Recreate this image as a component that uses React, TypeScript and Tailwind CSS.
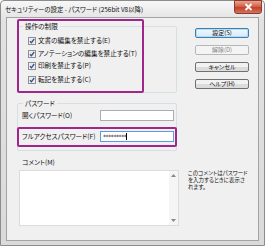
import React from "react";

const jp = "[font-family:'Noto_Sans_CJK_JP','Noto_Sans',sans-serif] [font-feature-settings:'palt']";

function Check() {
  return (
    <svg width="8" height="8" viewBox="0 0 8 8" className="shrink-0">
      <rect x="0.5" y="0.5" width="7" height="7" fill="#f4f4f4" stroke="#8e8f8f" />
      <rect x="1.5" y="1.5" width="5" height="5" fill="#e4e8ee" />
      <path d="M2 4.2 L3.4 5.8 L6.2 2" fill="none" stroke="#3b4f8a" strokeWidth="1.3" />
    </svg>
  );
}

function Btn({ label, kind }: { label: string; kind?: "default" | "disabled" }) {
  const base = "w-[54px] h-[10px] rounded-[2px] border flex items-center justify-center text-[6px] leading-none";
  if (kind === "default")
    return (
      <div className={`${base} border-[#3c7fb1] bg-[linear-gradient(#f0f8fd,#d5e9f7)] text-[#111] shadow-[inset_0_0_0_1px_#b6dcf3]`}>{label}</div>
    );
  if (kind === "disabled")
    return <div className={`${base} border-[#b5b8bb] bg-[#f4f4f4] text-[#8a8a8a]`}>{label}</div>;
  return <div className={`${base} border-[#707070] bg-[linear-gradient(#f2f2f2_50%,#dcdcdc_50%)] text-[#111]`}>{label}</div>;
}

function Row({ label, mt }: { label: string; mt: string }) {
  return (
    <div className={`flex items-center gap-[2px] h-[9px] ${mt}`}>
      <Check />
      <span className="whitespace-nowrap">{label}</span>
    </div>
  );
}

export default function App() {
  return (
    <div className={`w-[265px] h-[246px] flex flex-col bg-[linear-gradient(#f7f7f7,#e2e2e2_20px,#dadada)] border border-[#8c8c8c] rounded-t-[4px] ${jp}`}>
      <div className="h-[16px] flex items-start justify-between shrink-0">
        <span className="pl-[4px] pt-[4px] text-[6.4px] leading-[9px] text-[#111] whitespace-nowrap">
          セキュリティーの設定 - パスワード (256bit V8以降)
        </span>
        <div className="mr-[2px] mt-[-1px] w-[28px] h-[14px] rounded-b-[3px] border border-[#8a3b2e] bg-[linear-gradient(#e8a493,#d2634a_45%,#c2412a_55%,#d6735d)] flex items-center justify-center">
          <svg width="9" height="8" viewBox="0 0 9 8">
            <path d="M1.5 1 L7.5 7 M7.5 1 L1.5 7" stroke="#fff" strokeWidth="1.8" />
          </svg>
        </div>
      </div>
      <div className="relative flex-1 mx-[5px] mb-[4px] bg-[#f0f0f0] border border-[#a3a3a3] text-[#111]">
        {/* row 1 */}
        <div className="flex items-start">
          <div className="relative ml-[10px] mt-[8px] w-[160px] h-[67px] border border-[#d5dfe5] rounded-[2px]">
            <div className="absolute left-[5px] -top-[5px] px-[2px] bg-[#f0f0f0] text-[6.6px] leading-[9px]">操作の制限</div>
            <div className="flex flex-col pl-[10px] pt-[9px] text-[6.6px] leading-[9px]">
              <Row label="文書の編集を禁止する(E)" mt="mt-0" />
              <Row label="アノテーションの編集を禁止する(T)" mt="mt-[4px]" />
              <Row label="印刷を禁止する(P)" mt="mt-[3px]" />
              <Row label="転記を禁止する(C)" mt="mt-[5px]" />
            </div>
          </div>
          <div className="ml-[18px] mt-[10px] flex flex-col gap-[7px]">
            <Btn label="設定(S)" kind="default" />
            <Btn label="解除(D)" kind="disabled" />
            <Btn label="キャンセル" />
            <Btn label="ヘルプ(H)" />
          </div>
        </div>
        {/* password group */}
        <div className="relative ml-[10px] mt-[10px] w-[160px] h-[48px] border border-[#d5dfe5] rounded-[2px] text-[6.6px] leading-[9px]">
          <div className="absolute left-[5px] -top-[5px] px-[2px] bg-[#f0f0f0]">パスワード</div>
          <div className="flex items-center pt-[6px]">
            <span className="ml-[4px] w-[78px] whitespace-nowrap">開くパスワード(O)</span>
            <div className="w-[74px] h-[11px] bg-white border border-[#abadb3]" />
          </div>
          <div className="flex items-center mt-[10px]">
            <span className="ml-[4px] w-[78px] whitespace-nowrap">フルアクセスパスワード(F)</span>
            <div className="w-[74px] h-[11px] bg-white border border-[#569de5] flex items-center pl-[2px]">
              <span className="text-[6px] leading-none [font-family:'DejaVu_Sans',sans-serif] tracking-[-0.4px]">*********</span>
              <span className="w-px h-[7px] bg-black" />
            </div>
          </div>
        </div>
        {/* comment */}
        <div className="ml-[15px] mt-[7px] h-[9px] text-[6.6px] leading-[9px]">コメント(M)</div>
        <div className="flex items-start mt-[3px]">
          <div className="ml-[12px] w-[160px] h-[56px] bg-white border border-[#dcdcdc] flex justify-end">
            <div className="w-[9px] h-full bg-[#f5f5f5] flex flex-col items-center justify-between py-[3px]">
              <svg width="5" height="3" viewBox="0 0 5 3"><path d="M0 3 L2.5 0 L5 3 Z" fill="#888" /></svg>
              <svg width="5" height="3" viewBox="0 0 5 3"><path d="M0 0 L2.5 3 L5 0 Z" fill="#888" /></svg>
            </div>
          </div>
          <div className="ml-[9px] mt-[0px] text-[5.5px] whitespace-nowrap">
            <div className="h-[7px] leading-[7px]">このコメントはパスワード</div>
            <div className="h-[7px] leading-[7px]">を入力するときに表示さ</div>
            <div className="h-[7px] leading-[7px]">れます。</div>
          </div>
        </div>
        {/* highlight annotations */}
        <div className="absolute left-[10px] top-[1px] w-[127px] h-[74px] border-[2px] border-[#a0268c] rounded-[2px]" />
        <div className="absolute left-[10px] top-[109px] w-[160px] h-[20px] border-[2px] border-[#a0268c] rounded-[2px]" />
      </div>
    </div>
  );
}
